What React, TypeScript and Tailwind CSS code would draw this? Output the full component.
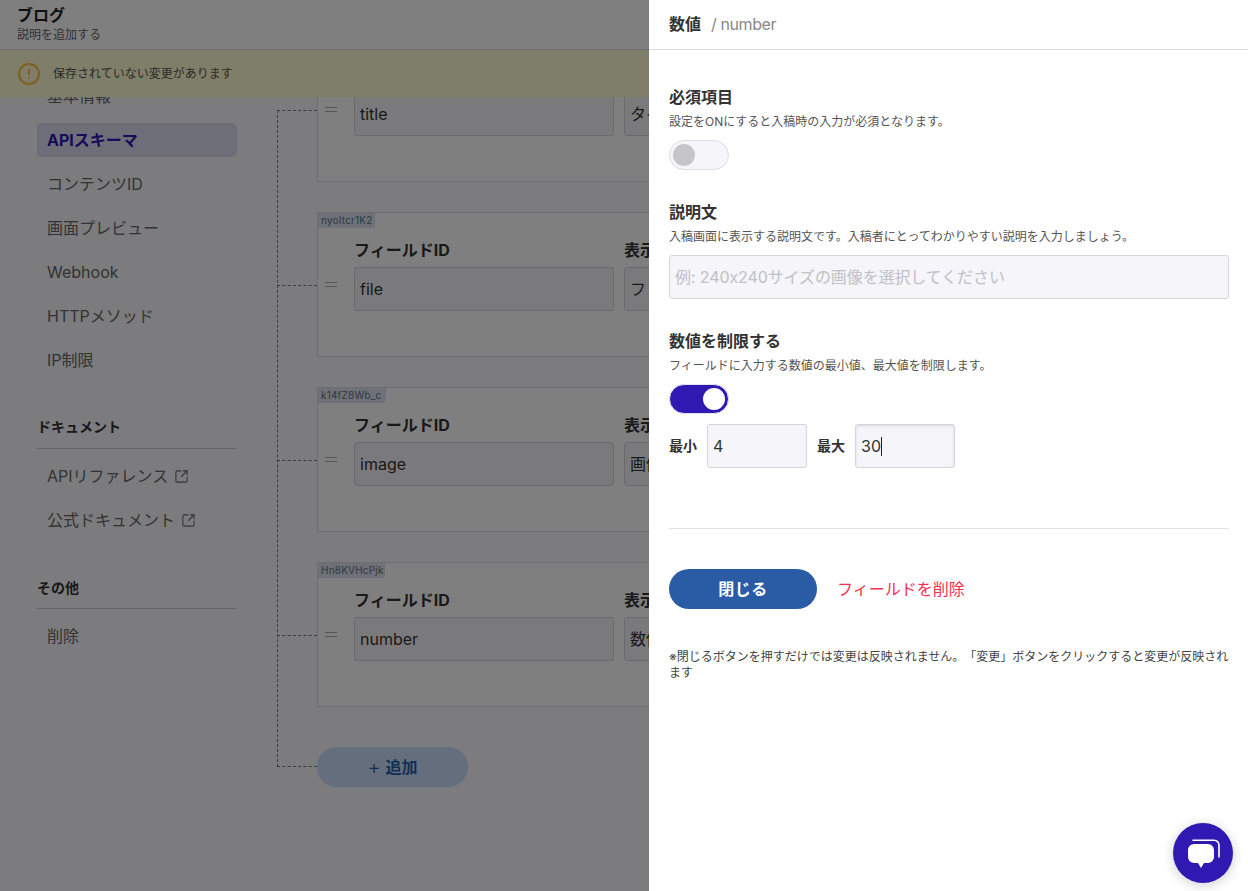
import { CircleAlert, SquareArrowOutUpRight } from "lucide-react";

const fields = [
  { tag: "zK3mTq9Ls0", id: "title", name: "タイトル", w: "w-[70px]" },
  { tag: "nyoItcr1K2", id: "file", name: "ファイル", w: "w-[57px]" },
  { tag: "k14fZ8Wb_c", id: "image", name: "画像", w: "w-[68px]" },
  { tag: "Hn8KVHcPjk", id: "number", name: "数値", w: "w-[67px]" },
];

const navItems = ["基本情報", "APIスキーマ", "コンテンツID", "画面プレビュー", "Webhook", "HTTPメソッド", "IP制限"];

function NavItem({ label, active, external }: { label: string; active?: boolean; external?: boolean }) {
  return (
    <div
      className={
        "flex h-[34px] items-center gap-[6px] rounded-[5px] px-[10px] text-base " +
        (active ? "bg-[#dcdcf0] font-bold text-[#2e19b3]" : "text-[#666]")
      }
    >
      {label}
      {external && <SquareArrowOutUpRight size={15} strokeWidth={1.7} />}
    </div>
  );
}

function FieldCard({ field }: { field: (typeof fields)[number] }) {
  return (
    <div className="relative flex h-[145px] w-[900px] border border-[#dcdce0] bg-white">
      <div className="absolute top-[72px] left-[-41px] w-[40px] border-t border-dashed border-[#777]" />
      <div className={"absolute top-0 left-0 h-[15px] rounded-br-[3px] bg-[#dce4f0] px-[3px] text-[10px] leading-[15px] tracking-[0.2px] text-[#667080] " + field.w}>
        {field.tag}
      </div>
      <div className="ml-[7px] h-[5px] w-[12px] self-center border-y border-[#aaa]" />
      <div className="mt-[25px] ml-[17px] flex gap-[10px]">
        {[
          { label: "フィールドID", value: field.id },
          { label: "表示名", value: field.name },
        ].map((col) => (
          <div key={col.label} className="w-[260px]">
            <div className="text-base leading-6 font-bold text-[#333]">{col.label}</div>
            <div className="mt-[5px] flex h-[44px] items-center rounded-[3px] border border-[#d5d5dc] bg-[#f5f5fa] px-[5px] text-base text-[#333]">
              {col.value}
            </div>
          </div>
        ))}
      </div>
    </div>
  );
}

function Section({ title, desc }: { title: string; desc: string }) {
  return (
    <>
      <div className="text-base leading-6 font-bold text-[#333]">{title}</div>
      <div className="mt-[5px] text-xs leading-4 text-[#555]">{desc}</div>
    </>
  );
}

export default function App() {
  return (
    <div className="relative h-[891px] w-[1248px] overflow-hidden bg-[#f8f8fc] font-['Inter','Noto_Sans_CJK_JP',sans-serif] text-[#333]">
      <div className="flex h-full flex-col">
        <header className="h-[50px] shrink-0 border-b border-[#d8d8dc] bg-white pt-[3px] pl-[17px]">
          <div className="text-base leading-6 font-bold text-[#222]">ブログ</div>
          <div className="text-xs leading-4 text-[#666]">説明を追加する</div>
        </header>
        <div className="z-10 flex h-[47px] shrink-0 items-center bg-[#fffcd2] pl-[17px]">
          <CircleAlert size={24} strokeWidth={2} className="text-[#ffbf3f]" />
          <span className="ml-[12px] text-xs text-[#555]">保存されていない変更があります</span>
        </div>
        <div className="flex min-h-0 flex-1 overflow-hidden">
          <nav className="-mt-[18px] ml-[37px] w-[200px] shrink-0">
            <div className="flex flex-col gap-[10px]">
              {navItems.map((item) => (
                <NavItem key={item} label={item} active={item === "APIスキーマ"} />
              ))}
            </div>
            <div className="mt-[40px] border-b border-[#c8c8cc] pb-[11px] text-sm leading-5 font-bold text-[#333]">ドキュメント</div>
            <div className="mt-[10px] flex flex-col gap-[10px]">
              <NavItem label="APIリファレンス" external />
              <NavItem label="公式ドキュメント" external />
            </div>
            <div className="mt-[41px] border-b border-[#c8c8cc] pb-[10px] text-sm leading-5 font-bold text-[#333]">その他</div>
            <div className="mt-[10px]">
              <NavItem label="削除" />
            </div>
          </nav>
          <main className="relative -mt-[60px] ml-[80px] self-start">
            <div className="absolute top-[73px] bottom-[20px] left-[-40px] border-l border-dashed border-[#777]" />
            <div className="flex flex-col gap-[30px]">
              {fields.map((field) => (
                <FieldCard key={field.id} field={field} />
              ))}
            </div>
            <div className="relative mt-[40px] flex h-[40px] w-[151px] items-center justify-center rounded-full bg-[#c8dcf8] font-bold text-[#295ca5]">
              <div className="absolute top-[19px] left-[-40px] w-[40px] border-t border-dashed border-[#777]" />
              <span className="mr-[5px] text-[20px] leading-none font-light">+</span>追加
            </div>
          </main>
        </div>
      </div>

      <div className="absolute inset-0 z-20 bg-black/50" />

      <aside className="absolute top-0 right-0 bottom-0 z-30 w-[599px] bg-white">
        <div className="flex h-[50px] items-center border-b border-[#dcdce0] pb-[2px] pl-[20px] text-base">
          <span className="font-bold text-[#333]">数値</span>
          <span className="ml-[10px] tracking-[-0.4px] text-[#888]">/ number</span>
        </div>
        <div className="w-[580px] pt-[35px] pl-[20px]">
          <Section title="必須項目" desc="設定をONにすると入稿時の入力が必須となります。" />
          <div className="mt-[10px] flex h-[30px] w-[60px] items-center rounded-full border border-[#dcdce4] bg-[#f5f5fa] pl-[3px]">
            <div className="h-[22px] w-[22px] rounded-full bg-[#c6c6c8]" />
          </div>

          <div className="mt-[30px]">
            <Section title="説明文" desc="入稿画面に表示する説明文です。入稿者にとってわかりやすい説明を入力しましょう。" />
          </div>
          <div className="mt-[10px] flex h-[44px] items-center rounded-[3px] border border-[#d5d5dc] bg-[#f5f5fa] px-[5px] text-base tracking-[-0.1px] text-[#c0c0c6]">
            例: 240x240サイズの画像を選択してください
          </div>

          <div className="mt-[30px]">
            <Section title="数値を制限する" desc="フィールドに入力する数値の最小値、最大値を制限します。" />
          </div>
          <div className="mt-[10px] flex h-[30px] w-[60px] items-center justify-end rounded-full border border-[#e4e4ec] bg-[#2e19b3] pr-[3px]">
            <div className="h-[22px] w-[22px] rounded-full bg-white" />
          </div>
          <div className="mt-[10px] flex items-center text-sm font-bold text-[#333]">
            <span>最小</span>
            <div className="ml-[10px] flex h-[44px] w-[100px] items-center rounded-[3px] border border-[#d5d5dc] bg-[#f5f5fa] px-[5px] text-base font-normal">
              4
            </div>
            <span className="ml-[10px]">最大</span>
            <div className="ml-[10px] flex h-[44px] w-[100px] items-center rounded-[3px] border border-[#d5d5dc] bg-[#f5f5fa] px-[5px] text-base font-normal shadow-[inset_0_1px_3px_rgba(0,0,0,0.12)]">
              30
              <span className="h-[19px] w-px bg-[#222]" />
            </div>
          </div>

          <div className="mt-[60px] h-px bg-[#e2e2e6]" />

          <div className="mt-[40px] flex items-center">
            <div className="flex h-[40px] w-[148px] items-center justify-center rounded-full bg-[#295ca5] text-base font-bold tracking-[0.5px] text-white">
              閉じる
            </div>
            <span className="ml-[20px] text-base text-[#f5304f]">フィールドを削除</span>
          </div>

          <p className="mt-[40px] text-xs leading-4 text-[#444] [text-spacing-trim:space-all]">
            ※閉じるボタンを押すだけでは変更は反映されません。「変更」ボタンをクリックすると変更が反映されます
          </p>
        </div>
      </aside>

      <div className="absolute right-[15px] bottom-[8px] z-40 h-[60px] w-[60px] rounded-full bg-[#2e19b3] shadow-[0_2px_12px_rgba(0,0,0,0.2)]">
        <svg viewBox="0 0 60 60" className="h-full w-full">
          <path d="M20 17.200H41a5 5 0 0 1 5 5V34" fill="none" stroke="#fff" strokeWidth="1.6" strokeLinecap="round" />
          <path d="M21 21H35a6 6 0 0 1 6 6V34a6 6 0 0 1-6 6H31L28 45 25 40H21a6 6 0 0 1-6-6V27a6 6 0 0 1 6-6Z" fill="#fff" />
        </svg>
      </div>
    </div>
  );
}
